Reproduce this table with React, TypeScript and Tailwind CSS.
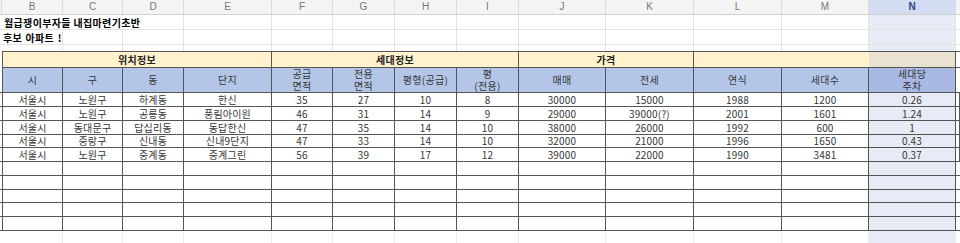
const widths = [
  'w-[61px]',
  'w-[60px]',
  'w-[61px]',
  'w-[88px]',
  'w-[61px]',
  'w-[62px]',
  'w-[62px]',
  'w-[62px]',
  'w-[87px]',
  'w-[88px]',
  'w-[88px]',
  'w-[87px]',
  'w-[87px]',
];

const letters = ['B', 'C', 'D', 'E', 'F', 'G', 'H', 'I', 'J', 'K', 'L', 'M', 'N'];

const headers = ['시', '구', '동', '단지', '공급\n면적', '전용\n면적', '평형(공급)', '평\n(전용)', '매매', '전세', '연식', '세대수', '세대당\n주차'];

const rows = [
  ['서울시', '노원구', '하계동', '한신', '35', '27', '10', '8', '30000', '15000', '1988', '1200', '0.26'],
  ['서울시', '노원구', '공릉동', '풍림아이원', '46', '31', '14', '9', '29000', '39000(?)', '2001', '1601', '1.24'],
  ['서울시', '동대문구', '답십리동', '동답한신', '47', '35', '14', '10', '38000', '26000', '1992', '600', '1'],
  ['서울시', '중랑구', '신내동', '신내9단지', '47', '33', '14', '10', '32000', '21000', '1996', '1650', '0.43'],
  ['서울시', '노원구', '중계동', '중계그린', '56', '39', '17', '12', '39000', '22000', '1990', '3481', '0.37'],
];

const dataHeights = ['h-[14px]', 'h-[14px]', 'h-[14px]', 'h-[13px]', 'h-[14px]'];
const emptyHeights = ['h-[14px]', 'h-[14px]', 'h-[13px]', 'h-[14px]', 'h-[14px]'];

function LightRow({ height, first }: { height: string; first?: React.ReactNode }) {
  return (
    <div className={`flex ${height} border-b border-[#e3e3e3]`}>
      <div className="w-[2px] shrink-0" />
      {widths.map((w, i) => (
        <div
          key={i}
          className={`${w} shrink-0 border-r border-[#e3e3e3] ${i === 12 ? 'bg-[#e6ebf6]' : ''} ${i === 0 ? 'relative' : ''}`}
        >
          {i === 0 && first}
        </div>
      ))}
      <div className="flex-1" />
    </div>
  );
}

export default function App() {
  return (
    <div
      className="w-[960px] h-[243px] overflow-hidden bg-white text-[10px] text-[#363636]"
      style={{ fontFamily: '"Noto Sans CJK KR", "Noto Sans", sans-serif' }}
    >
      {/* column letters */}
      <div className="flex h-[15px] border-b border-[#d0d0d0] bg-[#f4f4f4]">
        <div className="w-[2px] shrink-0 border-r border-[#dcdcdc]" />
        {widths.map((w, i) => (
          <div
            key={i}
            className={`${w} shrink-0 flex items-center justify-center border-r border-[#dcdcdc] leading-none ${
              i === 12 ? 'bg-[#d3dcf0] text-[#27478a] font-bold' : 'text-[#777]'
            }`}
            style={{ fontFamily: '"Liberation Sans", sans-serif' }}
          >
            {letters[i]}
          </div>
        ))}
        <div className="flex-1" />
      </div>

      {/* title rows */}
      <div className="flex h-[15px] border-b border-[#e3e3e3]">
        <div className="w-[2px] shrink-0" />
        <div className="w-[182px] shrink-0 flex items-center pl-[2px] pt-px border-r border-[#e3e3e3] font-bold text-black whitespace-nowrap tracking-[0.35px]">
          월급쟁이부자들 내집마련기초반
        </div>
        {widths.slice(3).map((w, i) => (
          <div key={i} className={`${w} shrink-0 border-r border-[#e3e3e3] ${i === 9 ? 'bg-[#e6ebf6]' : ''}`} />
        ))}
        <div className="flex-1" />
      </div>
      <LightRow
        height="h-[15px]"
        first={
          <div className="absolute inset-0 flex items-center pl-[1px] pt-px overflow-hidden whitespace-nowrap font-bold text-black tracking-[0.3px] [word-spacing:1px]">
            후보 아파트 !
          </div>
        }
      />
      <div className="flex h-[6px]">
        <div className="w-[2px] shrink-0" />
        {widths.map((w, i) => (
          <div key={i} className={`${w} shrink-0 border-r border-[#e3e3e3] ${i === 12 ? 'bg-[#e6ebf6]' : ''}`} />
        ))}
        <div className="flex-1" />
      </div>

      {/* band row */}
      <div className="flex h-[17px] font-bold text-[#222] tracking-[0.3px]">
        <div className="w-[2px] shrink-0" />
        <div className="w-[270px] shrink-0 flex items-center justify-center border border-[#555] bg-[#fff2cc]">위치정보</div>
        <div className="w-[247px] shrink-0 flex items-center justify-center border-y border-r border-[#555] bg-[#fff2cc]">세대정보</div>
        <div className="w-[175px] shrink-0 flex items-center justify-center border-y border-r border-[#555] bg-[#fff2cc]">가격</div>
        <div className="w-[175px] shrink-0 border-y border-[#555] bg-[#fff2cc]" />
        <div className="w-[87px] shrink-0 border-y border-r border-[#555] bg-[#e9e2d0]" />
        <div className="flex-1 border-y border-[#555]" />
      </div>

      {/* header row */}
      <div className="flex h-[25px] border-b border-[#555]">
        <div className="w-[2px] shrink-0" />
        {headers.map((h, i) => (
          <div
            key={i}
            className={`${widths[i]} shrink-0 flex items-center justify-center text-center whitespace-pre leading-[12px] tracking-[0.3px] border-r border-[#555] ${
              i === 0 ? 'border-l' : ''
            } ${i === 12 ? 'bg-[#a8b9e4]' : 'bg-[#b4c6e7]'}`}
          >
            {h}
          </div>
        ))}
        <div className="flex-1" />
      </div>

      {/* data rows */}
      {rows.map((r, ri) => (
        <div key={ri} className={`flex ${dataHeights[ri]} border-b border-[#555]`}>
          <div className="w-[2px] shrink-0" />
          {r.map((v, i) => (
            <div
              key={i}
              className={`${widths[i]} shrink-0 flex items-center justify-center leading-none tracking-[0.2px] border-r border-[#555] ${
                i === 0 ? 'border-l' : ''
              } ${i === 12 ? 'bg-[#e6ebf6]' : ''}`}
            >
              {v}
            </div>
          ))}
          <div className="flex-1 border-r border-[#555]" />
        </div>
      ))}

      {/* empty rows */}
      {emptyHeights.map((h, ri) => (
        <div key={ri} className={`flex ${h} border-b border-[#555]`}>
          <div className="w-[2px] shrink-0" />
          {widths.map((w, i) => (
            <div
              key={i}
              className={`${w} shrink-0 border-r border-[#555] ${i === 0 ? 'border-l' : ''} ${i === 12 ? 'bg-[#e6ebf6]' : ''}`}
            />
          ))}
          <div className="flex-1" />
        </div>
      ))}

      {/* below table */}
      <div className="flex h-[14px]">
        <div className="w-[2px] shrink-0" />
        {widths.map((w, i) => (
          <div key={i} className={`${w} shrink-0 border-r border-[#ececec] ${i === 12 ? 'bg-[#e6ebf6]' : ''}`} />
        ))}
        <div className="flex-1" />
      </div>
    </div>
  );
}
